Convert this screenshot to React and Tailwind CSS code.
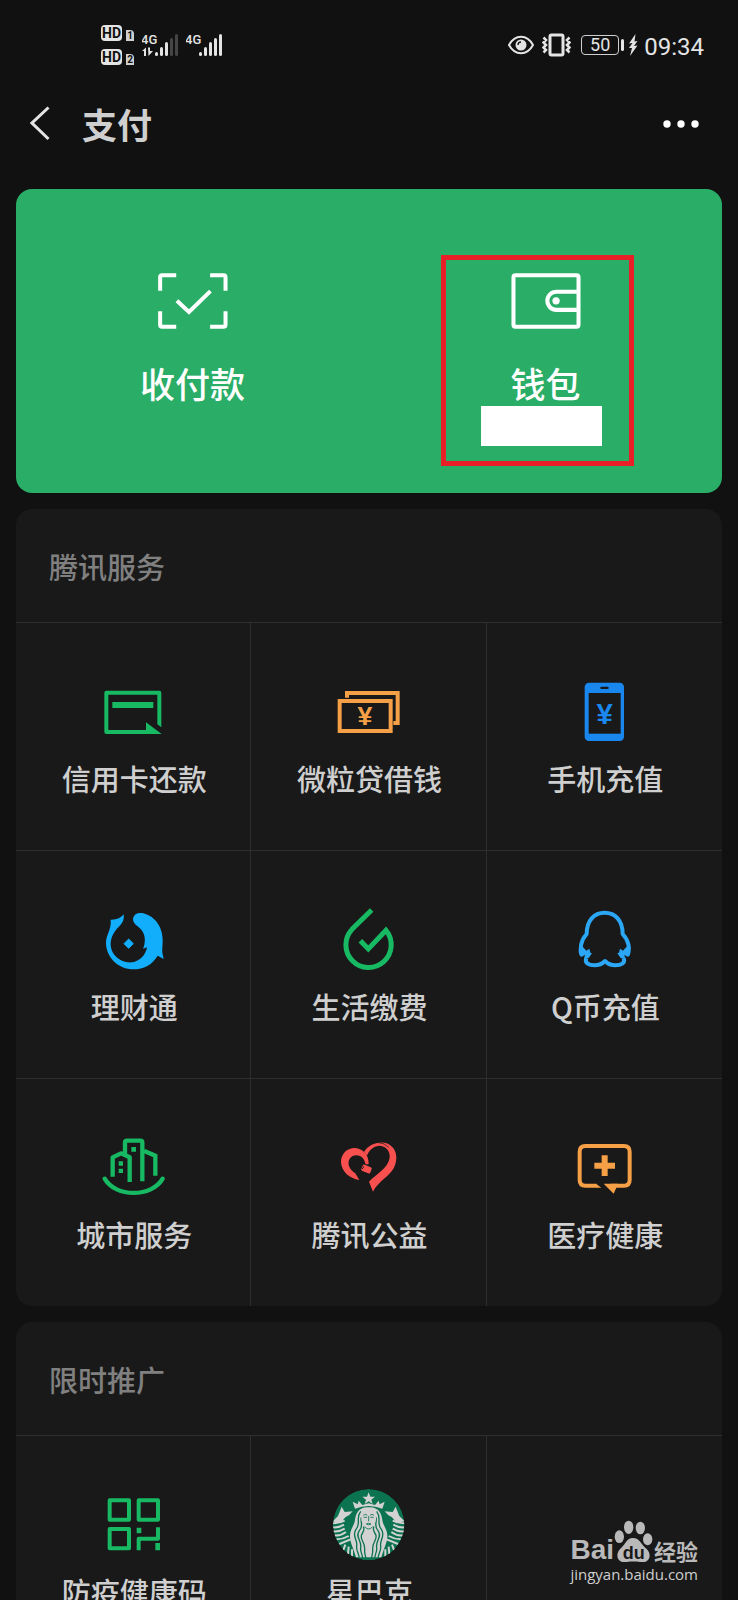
import React from "react";

const App = () => {
    return (
        <div className="relative h-screen overflow-hidden bg-[#111111] text-[#cfcfcf] font-['Noto_Sans_CJK_SC',sans-serif]">
            <StatusBar />
            <Header />
            <main className="mt-8 px-4 flex flex-col gap-4">
                <PayCard />
                <Section title="腾讯服务" items={tencentServices} />
                <Section title="限时推广" items={promotions} />
            </main>
            <Watermark />
        </div>
    );
};

const StatusBar = () => (
    <div className="h-[90px] pl-[101px] pr-[34px] flex items-center justify-between text-[#e4e4e4] font-[Roboto,sans-serif]">
        <div className="flex items-center">
            <div className="flex flex-col gap-2">
                <HdBadge sim="1" />
                <HdBadge sim="2" />
            </div>
            <div className="ml-2 flex">
                <Signal level={3} data />
                <Signal level={5} />
            </div>
        </div>
        <div className="flex items-center">
            <svg className="w-[26px] h-[24px]" viewBox="0 0 26 24" fill="none">
                <path d="M1 12C7 1 19 1 25 12C19 23 7 23 1 12Z" stroke="currentColor" strokeWidth="2" />
                <circle cx="13" cy="12" r="5.5" fill="currentColor" />
                <path d="M10 12a3 3 0 0 1 3-3" stroke="#111111" strokeWidth="1.3" />
            </svg>
            <svg className="ml-2 w-[29px] h-[24px]" viewBox="0 0 29 24" fill="none" stroke="currentColor">
                <rect x="8" y="2" width="13" height="20" rx="1.5" strokeWidth="3" />
                <path d="M1.500 4.500l2.500 2.500l-2.500 2.500l2.500 2.500l-2.500 2.500l2.500 2.500l-2.500 2.500M27.500 4.500l-2.500 2.500l2.500 2.500l-2.500 2.500l2.500 2.500l-2.500 2.500l2.500 2.500" strokeWidth="2.500" />
            </svg>
            <div className="ml-2.5 flex items-center gap-0.5">
                <span className="w-[38px] h-[20px] rounded-sm border border-[#cfcfcf] flex items-center justify-center text-[18px] leading-none">50</span>
                <span className="w-[3px] h-[12px] rounded-sm bg-[#e4e4e4]" />
            </div>
            <svg className="ml-1 w-[10px] h-[22px]" viewBox="0 0 10 22" fill="currentColor">
                <path d="M7.500 0L1 9.500L4.500 9L1 14L4 14L2 22L9.500 11.500L6 12L9.500 7L6.500 7.500Z" />
            </svg>
            <span className="ml-1.5 pt-1 text-2xl leading-8">09:34</span>
        </div>
    </div>
);

const HdBadge = ({ sim }) => (
    <div className="flex items-end gap-1">
        <span className="w-[21px] h-4 rounded bg-[#e4e4e4] text-[#111111] text-[14px] leading-4 font-bold text-center">HD</span>
        <span className="w-2 h-[11px] rounded-tr bg-[#d0d0d0] text-[#111111] text-[10px] leading-[11px] font-bold text-center">{sim}</span>
    </div>
);

const bars = [
    { x: 13, h: 4 },
    { x: 18, h: 9 },
    { x: 23, h: 14 },
    { x: 28, h: 18 },
    { x: 33, h: 22 },
];

const Signal = ({ level, data }) => (
    <svg className="w-[44px] h-[24px]" viewBox="0 0 44 24" fill="currentColor">
        <text x="-1" y="11" fontSize="13" fontWeight="500" fontFamily="Roboto, sans-serif">4G</text>
        {data && <path d="M0 18L4 14.500V23H2V18ZM6 14.500H8V18H11L6.500 23Z" />}
        {bars.map((bar, i) => (
            <rect key={bar.x} x={bar.x} y={23 - bar.h} width="3" height={bar.h} rx="1.500" opacity={i < level ? 1 : 0.25} />
        ))}
    </svg>
);

const Header = () => (
    <header className="h-[67px] pl-[30px] pr-[38px] flex items-center">
        <button aria-label="返回">
            <svg className="w-5 h-9" viewBox="0 0 20 36" fill="none" stroke="#e4e4e4" strokeWidth="3">
                <path d="M18.500 1.500L2 17L18.500 33" />
            </svg>
        </button>
        <h1 className="ml-8 flex-1 text-[35px] leading-[48px] font-bold">支付</h1>
        <button aria-label="更多">
            <svg className="w-[38px] h-3" viewBox="0 0 38 12" fill="#ffffff">
                <circle cx="5" cy="6" r="3.700" />
                <circle cx="19" cy="6" r="3.700" />
                <circle cx="33" cy="6" r="3.700" />
            </svg>
        </button>
    </header>
);

const PayCard = () => (
    <section className="h-[304px] rounded-2xl bg-[#2aae67] text-white grid grid-cols-2">
        <button className="pt-[84px] flex flex-col items-center gap-7.5">
            <svg className="w-[70px] h-14" viewBox="114 71 208 167" fill="none" stroke="currentColor" strokeWidth="12">
                <path d="M120 124V84Q120 78 126 78H168M269 78H309Q315 78 315 84V124M315 185V225Q315 231 309 231H269M168 231H126Q120 231 120 225V185" />
                <path d="M170 154L206 187L270 125" />
            </svg>
            <span className="text-[35px] leading-[48px] font-medium">收付款</span>
        </button>
        <button className="relative pt-[84px] flex flex-col items-center gap-7.5">
            <svg className="w-[70px] h-14" viewBox="242 86 208 167" fill="none" stroke="currentColor" strokeWidth="12">
                <rect x="249" y="93" width="194" height="153" rx="6" />
                <path d="M443 142H377A27 27 0 0 0 377 196H443" />
                <circle cx="376" cy="169" r="11" fill="currentColor" stroke="none" />
            </svg>
            <span className="text-[35px] leading-[48px] font-medium">钱包</span>
            <span className="absolute top-[217px] left-[112px] w-[121px] h-[40px] bg-white" />
            <span className="absolute top-[66px] left-[72px] w-[193px] h-[211px] border-5 border-[#e81f26]" />
        </button>
    </section>
);

const Section = ({ title, items }) => (
    <section className="rounded-2xl bg-[#191919] overflow-hidden">
        <h2 className="h-[113px] pl-[33px] pt-0.5 flex items-center text-[29px] font-medium text-[#808080]">{title}</h2>
        <div className="grid grid-cols-3">
            {items.map((item, i) => (
                <Tile key={i} {...item} />
            ))}
        </div>
    </section>
);

const Tile = ({ icon, label }) => {
    if (!label) {
        return <div className="h-[228px] border-t border-[#2e2e2e]" />;
    }
    return (
        <button className="h-[228px] pt-[53px] pl-0.5 border-t border-r border-[#2e2e2e] nth-[3n]:border-r-0 flex flex-col items-center gap-2.5">
            {icon}
            <span className="text-[29px] leading-10 font-medium whitespace-nowrap">{label}</span>
        </button>
    );
};

const CreditCardIcon = () => (
    <svg className="w-[72px] h-[72px]" viewBox="143 18 216 216" fill="#17b963">
        <path d="M168 62H327Q333 62 333 68V172L321 163V74H174V180H287V157L334 192H168Q162 192 162 186V68Q162 62 168 62Z" fillRule="evenodd" />
        <rect x="186" y="96" width="123" height="18" />
    </svg>
);

const LoanIcon = () => (
    <svg className="w-[72px] h-[72px]" viewBox="129 18 216 216" fill="none" stroke="#f5a046" strokeWidth="12">
        <rect x="149" y="93" width="153" height="90" />
        <path d="M171 83V69H323V159H310" />
        <text x="225" y="164" fontSize="80" fontWeight="700" fontFamily="Liberation Sans, sans-serif" textAnchor="middle" fill="#f5a046" stroke="none">¥</text>
    </svg>
);

const PhoneIcon = () => (
    <svg className="w-[72px] h-[72px]" viewBox="835 18 216 216" fill="#1a87ee">
        <rect x="882" y="38" width="118" height="175" rx="13" />
        <rect x="894" y="69" width="96" height="122" fill="#191919" />
        <rect x="929" y="50" width="25" height="7" rx="3" fill="#191919" />
        <text x="942" y="163" fontSize="88" fontWeight="700" fontFamily="Liberation Sans, sans-serif" textAnchor="middle">¥</text>
    </svg>
);

const FishIcon = () => (
    <svg className="w-[72px] h-[72px]" viewBox="143 42 216 216" fill="#12aefc">
        <path d="M181 89C198 90 212 84 220 73C223 94 212 104 201 115C180 138 176 165 187 187C198 209 225 220 247 217C270 212 286 195 290 172L278 176C285 160 286 140 277 125C268 108 248 105 248 87C250 72 262 68 273 69C307 73 337 105 337 150C337 168 335 178 336 188L340 207L322 197C305 225 280 238 250 238C203 238 167 201 167 158C167 133 184 120 181 89Z" />
        <path d="M235 147L249 161L235 175L221 161Z" stroke="#12aefc" strokeWidth="3" strokeLinejoin="round" />
    </svg>
);

const DropIcon = () => (
    <svg className="w-[72px] h-[72px]" viewBox="849 42 216 216" fill="none" stroke="#17b963" strokeWidth="15">
        <path d="M965 60L906 118A68 68 0 1 0 1008 121L955 177L931 152" />
    </svg>
);

const PenguinIcon = () => (
    <svg className="w-[72px] h-[72px]" viewBox="115 42 216 216" fill="none" stroke="#2ba7f5" strokeWidth="12" strokeLinejoin="round">
        <path d="M167 205C161 220 175 226 192 226C206 226 215 221 223 213C231 221 240 226 254 226C271 226 285 220 279 205M158 188C145 178 150 152 168 132C168 92 190 68 222 68C254 68 276 92 276 132C294 152 301 178 286 188" />
        <path d="M146 165C141 185 146 200 152 200C156 200 160 196 163 194L160 208L174 204L184 190L179 188L176 176L167 182L156 170ZM298 165C303 185 298 200 292 200C288 200 284 196 281 194L284 208L270 204L260 190L265 188L268 176L277 182L288 170Z" fill="#2ba7f5" stroke="none" />
    </svg>
);

const CityIcon = () => (
    <svg className="w-[72px] h-[72px]" viewBox="143 36 216 216" fill="none" stroke="#17b963" strokeWidth="13">
        <path d="M187 170V112L212 100L238 112V186" strokeLinejoin="round" />
        <path d="M224 102V68Q224 62 230 62H270Q276 62 276 68V184M282 93L315 107V167" />
        <path d="M163 176C195 233 305 233 337 176" strokeLinecap="round" />
        <path d="M205 124H218V137H205ZM205 146H218V159H205ZM243 81H257V95H243Z" fill="#17b963" stroke="none" />
    </svg>
);

const HeartIcon = () => (
    <svg className="w-[72px] h-[72px]" viewBox="849 36 216 216" fill="#f8504f">
        <path d="M956 133C957 103 937 84 912 84C887 85 872 106 873 128C876 156 898 174 928 180L916 160C897 148 891 130 899 116C908 102 932 102 941 118Q945 126 947 133Z" />
        <path d="M942 96C955 73 988 61 1014 71C1040 84 1046 115 1031 145C1017 170 984 185 969 215L957 185C979 161 1014 145 1019 113C1021 92 1007 77 987 77C970 79 957 90 951 107Z" />
        <path d="M985 68Q1003 68 1016 82" fill="none" stroke="#191919" strokeWidth="2" />
        <rect x="935" y="137" width="29" height="20" rx="5" transform="rotate(22 949 147)" />
        <path d="M941 139l-4 8" stroke="#191919" strokeWidth="3" />
    </svg>
);

const MedicalIcon = () => (
    <svg className="w-[72px] h-[72px]" viewBox="85 36 216 216" fill="none" stroke="#f5a046" strokeWidth="12">
        <path d="M168 197H134Q117 197 117 180V95Q117 78 134 78H250Q267 78 267 95V180Q267 197 250 197H210" />
        <path d="M166 191L182 203H166ZM189 191H232L227 203L219 221Z" fill="#f5a046" stroke="none" />
        <path d="M161 137H223M192 106V168" strokeWidth="18" />
    </svg>
);

const QrIcon = () => (
    <svg className="w-[72px] h-[72px]" viewBox="143 57 216 216" fill="none" stroke="#17b963" strokeWidth="12" strokeLinejoin="round">
        <rect x="178" y="91" width="58" height="58" />
        <rect x="265" y="91" width="58" height="58" />
        <rect x="178" y="177" width="58" height="58" />
        <path d="M265 241V206H323V172" />
        <path d="M266 173V190M322 219V241" strokeWidth="14" />
    </svg>
);

const SirenIcon = () => (
    <svg className="w-[72px] h-[72px]" viewBox="849 55 216 216" fill="#d2d2d2">
        <clipPath id="siren">
            <circle cx="956" cy="162" r="107" />
        </clipPath>
        <g clipPath="url(#siren)">
            <circle cx="956" cy="162" r="107" fill="#0c7350" />
            {/* star and crown */}
            <path d="M956 65L961 78L975 78L964 87L968 100L956 92L944 100L948 87L937 78L951 78Z" />
            <path d="M915 114L908 93L923 101L926 90L937 103L956 98L975 103L986 90L989 101L1004 93L997 114Q956 98 915 114Z" />
            {/* hair */}
            <path d="M956 110C925 108 917 130 915 148C912 168 898 178 900 200C902 220 910 232 918 260L994 260C1002 232 1010 220 1012 200C1014 178 1000 168 997 148C995 130 987 108 956 110Z" />
            <g fill="none" stroke="#0c7350" strokeWidth="4">
                <path d="M932 122C916 142 934 158 918 176C904 194 924 208 920 226C918 240 926 246 928 262" />
                <path d="M934 140C930 156 942 164 928 180C914 198 936 210 932 230C930 244 938 250 938 266" />
                <path d="M940 168C946 178 938 184 934 194C930 208 946 216 944 234C942 250 948 256 948 268" />
                <path d="M980 122C996 142 978 158 994 176C1008 194 988 208 992 226C994 240 986 246 984 262" />
                <path d="M978 140C982 156 970 164 984 180C998 198 976 210 980 230C982 244 974 250 974 266" />
                <path d="M972 168C966 178 974 184 978 194C982 208 966 216 968 234C970 250 964 256 964 268" />
            </g>
            {/* face */}
            <path d="M934 128Q956 104 978 128V148Q972 170 956 176Q940 170 934 148Z" />
            <path d="M940 134Q946 128 952 134M960 134Q966 128 972 134M941 140H951M961 140H971M956 136V152M949 160Q956 156 963 160Q956 165 949 160M944 168Q956 182 968 168" fill="none" stroke="#0c7350" strokeWidth="2.500" />
            {/* tails */}
            <path d="M875 108L884 124L908 122Q898 136 886 140Q878 148 874 158L848 152L864 136Z" />
            <path d="M1037 108L1028 124L1004 122Q1014 136 1026 140Q1034 148 1038 158L1064 152L1048 136Z" />
            <path d="M848 158Q862 158 884 150M848 170Q866 172 882 162M850 182Q868 184 884 174M854 194Q872 196 888 184M860 206Q878 206 896 196M868 220L902 206M880 238L886 222M894 250L896 228M906 260L906 236" fill="none" stroke="#d2d2d2" strokeWidth="6" />
            <path d="M1064 158Q1050 158 1028 150M1064 170Q1046 172 1030 162M1062 182Q1044 184 1028 174M1058 194Q1040 196 1024 184M1052 206Q1034 206 1016 196M1044 220L1010 206M1032 238L1026 222M1018 250L1016 228M1006 260L1006 236" fill="none" stroke="#d2d2d2" strokeWidth="6" />
        </g>
    </svg>
);

const Watermark = () => (
    <div className="absolute right-10 bottom-3.5 flex flex-col items-end text-[#b9b9b9] font-['Open_Sans',sans-serif]">
        <div className="h-[42px] flex items-end">
            <span className="text-[28px] leading-6 font-bold font-['Liberation_Sans',sans-serif]">Bai</span>
            <svg className="w-[40px] h-[42px]" viewBox="213 1200 120 126" fill="currentColor">
                <ellipse cx="229" cy="1250" rx="14" ry="19" />
                <ellipse cx="257" cy="1222" rx="14" ry="20" />
                <ellipse cx="292" cy="1224" rx="14" ry="19" />
                <ellipse cx="314" cy="1258" rx="14" ry="18" />
                <path d="M270 1254C290 1254 294 1274 310 1286C328 1302 320 1328 298 1327C280 1324 262 1324 246 1327C222 1328 216 1302 232 1286C248 1274 250 1254 270 1254Z" />
                <text x="272" y="1316" fontSize="54" fontWeight="700" fontFamily="Liberation Sans, sans-serif" textAnchor="middle" fill="#191919">du</text>
            </svg>
            <span className="text-[22px] leading-6 font-bold font-['Noto_Sans_CJK_SC',sans-serif]">经验</span>
        </div>
        <span className="text-[15px] leading-6 text-[#cfcfcf]">jingyan.baidu.com</span>
    </div>
);

const tencentServices = [
    { icon: <CreditCardIcon />, label: "信用卡还款" },
    { icon: <LoanIcon />, label: "微粒贷借钱" },
    { icon: <PhoneIcon />, label: "手机充值" },
    { icon: <FishIcon />, label: "理财通" },
    { icon: <DropIcon />, label: "生活缴费" },
    { icon: <PenguinIcon />, label: "Q币充值" },
    { icon: <CityIcon />, label: "城市服务" },
    { icon: <HeartIcon />, label: "腾讯公益" },
    { icon: <MedicalIcon />, label: "医疗健康" },
];

const promotions = [
    { icon: <QrIcon />, label: "防疫健康码" },
    { icon: <SirenIcon />, label: "星巴克" },
    {},
];

export default App;
